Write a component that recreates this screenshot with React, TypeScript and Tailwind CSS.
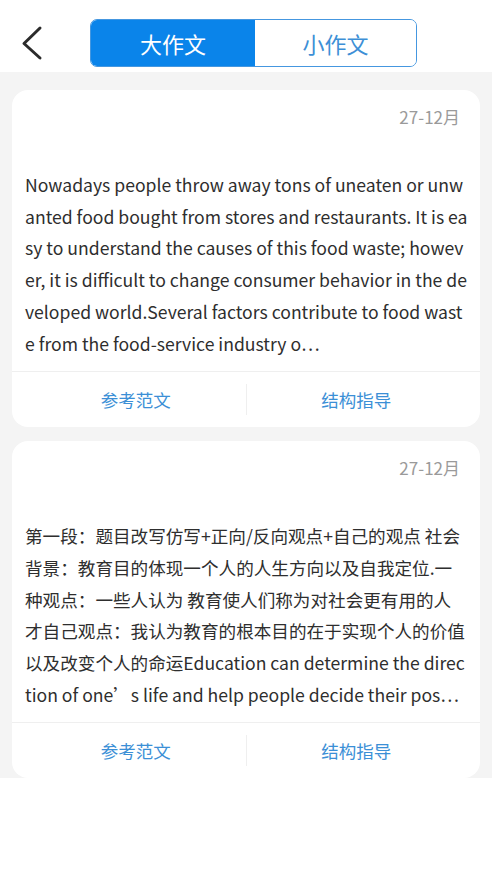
import React from "react";

const FONT = { fontFamily: '"Noto Sans CJK SC", "Noto Sans", sans-serif' };

const items = [
  {
    date: "27-12月",
    text:
      "Nowadays people throw away tons of uneaten or unwanted food bought from stores and restaurants. It is easy to understand the causes of this food waste; however, it is difficult to change consumer behavior in the developed world.Several factors contribute to food waste from the food-service industry o…",
  },
  {
    date: "27-12月",
    text:
      "第一段：题目改写仿写+正向/反向观点+自己的观点 社会背景：教育目的体现一个人的人生方向以及自我定位.一种观点：一些人认为 教育使人们称为对社会更有用的人才自己观点：我认为教育的根本目的在于实现个人的价值以及改变个人的命运Education can determine the direction of one’s life and help people decide their pos…",
  },
];

function Card({ date, text }: { date: string; text: string }) {
  return (
    <div className="bg-white rounded-[16px] flex flex-col">
      <div className="flex justify-end pt-[16px] pr-[20px]">
        <span className="text-[17px] leading-[22px] text-[#9a9a9a]">{date}</span>
      </div>
      <p className="mt-[41px] pl-[13px] pr-[12px] text-[17.6px] leading-[31.7px] text-[#2e2e2e] break-all line-clamp-6">
        {text}
      </p>
      <div className="mt-[12px] border-t border-[#efefef] h-[56px] flex items-center">
        <div className="flex-1 flex justify-center pl-[14px] text-[17.5px] text-[#3b8fd6]">参考范文</div>
        <div className="w-px h-[31px] bg-[#efefef]" />
        <div className="flex-1 flex justify-center pr-[14px] text-[17.5px] text-[#3b8fd6]">结构指导</div>
      </div>
    </div>
  );
}

export default function App() {
  return (
    <div className="w-[492px] min-h-[878px] bg-white" style={FONT}>
      <div className="h-[72px] pt-[14px] flex items-center">
        <div className="w-[90px] flex items-center pl-[20px]">
          <svg width="24" height="36" viewBox="0 0 24 36" fill="none">
            <polyline
              points="20,3 4,18.5 20,33"
              stroke="#2b2b2b"
              strokeWidth="3"
              strokeLinecap="round"
              strokeLinejoin="round"
            />
          </svg>
        </div>
        <div className="flex w-[327px] h-[48px] rounded-[7px] border-[1.5px] border-[#4597e0] overflow-hidden">
          <div className="w-[164px] h-full bg-[#0a84ea] flex items-center justify-center text-white text-[22px]">
            大作文
          </div>
          <div className="flex-1 h-full bg-white flex items-center justify-center text-[#3d8fd6] text-[22px]">
            小作文
          </div>
        </div>
      </div>
      <div className="bg-[#f4f4f4] px-[12px] pt-[18px] flex flex-col gap-[14px]">
        {items.map((it, i) => (
          <Card key={i} date={it.date} text={it.text} />
        ))}
      </div>
    </div>
  );
}
